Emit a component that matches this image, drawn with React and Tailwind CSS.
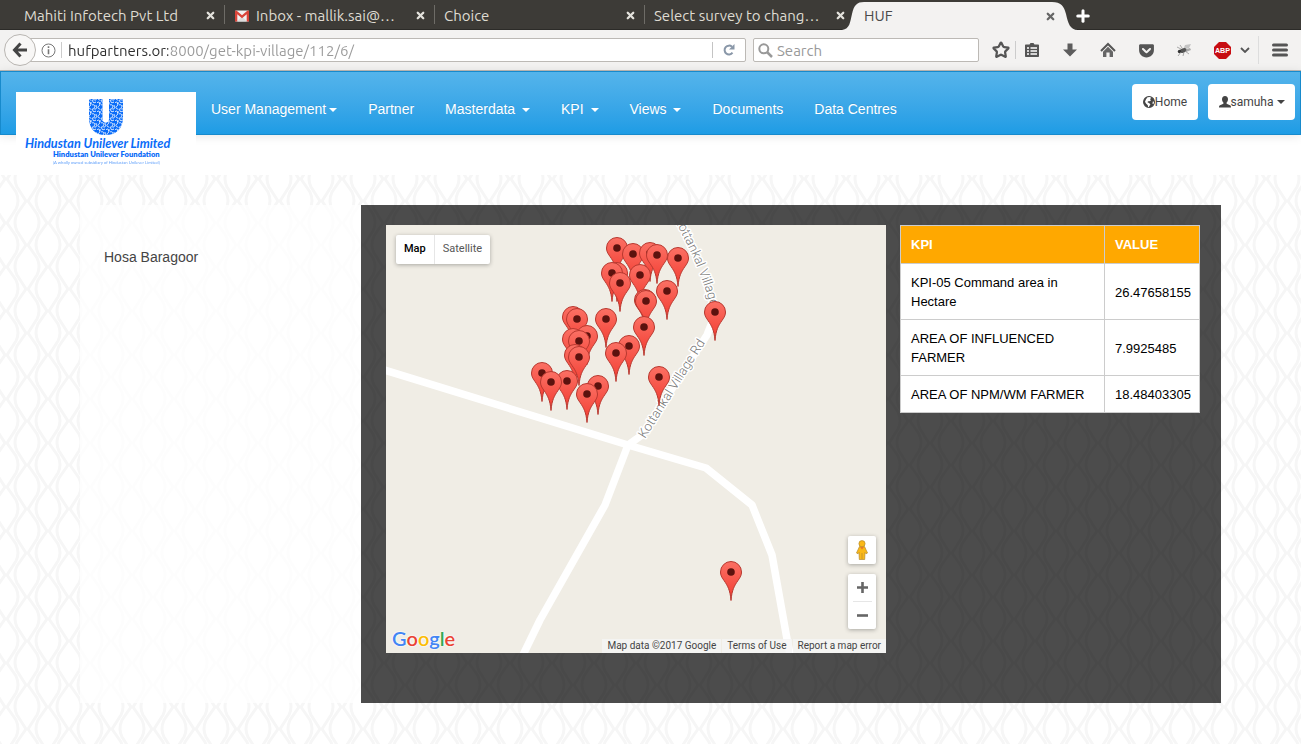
import React from "react";
import { FaGetPocket } from "react-icons/fa";
import { Star, X, Plus } from "lucide-react";

const TABS = [
  { title: "Mahiti Infotech Pvt Ltd" },
  { title: "Inbox - mallik.sai@…", mail: true },
  { title: "Choice" },
  { title: "Select survey to chang…" },
];

const NAV = [
  { label: "User Management", menu: true, tight: true },
  { label: "Partner" },
  { label: "Masterdata", menu: true },
  { label: "KPI", menu: true },
  { label: "Views", menu: true },
  { label: "Documents" },
  { label: "Data Centres" },
];

const ROWS = [
  ["KPI-05 Command area in Hectare", "26.47658155"],
  ["AREA OF INFLUENCED FARMER", "7.9925485"],
  ["AREA OF NPM/WM FARMER", "18.48403305"],
];

const PINS = [
  [231, 23], [247, 29], [264, 28], [271, 30], [292, 33], [231, 48], [226, 48],
  [254, 50], [234, 58], [281, 66], [259, 75], [260, 76], [329, 87], [187, 92],
  [191, 94], [220, 94], [258, 102], [201, 111], [187, 114], [193, 116],
  [243, 121], [230, 128], [189, 130], [193, 132], [156, 148], [273, 152],
  [181, 156], [165, 157], [212, 161], [201, 169], [345, 347],
];

function GmailIcon() {
  return (
    <svg className="size-4 shrink-0" viewBox="0 0 16 16" aria-hidden="true">
      <rect x="1" y="2.5" width="14" height="11" rx="1" fill="#f2f2f2" />
      <path d="M3 13.5 8 8.6l5 4.9z" fill="#dcdcdc" />
      <path d="M1 3.5v10h2.3V6.2L8 10.3l4.7-4.1v7.3H15v-10c0-.8-1-1.3-1.7-.8L8 7.2 2.7 2.7C2 2.200 1 2.700 1 3.500z" fill="#d9453a" />
    </svg>
  );
}

function Tab({ title, mail }) {
  return (
    <div className="flex w-[210px] shrink-0 items-center pr-[6px] pt-[2px]">
      {mail && <span className="-mr-1 pl-[10px]"><GmailIcon /></span>}
      <button className="min-w-0 flex-1 whitespace-nowrap pl-[10px] text-left">{title}</button>
      <button aria-label={"Close " + title} className="flex size-4 shrink-0 items-center justify-center">
        <X className="size-[11px] text-[#e4e2dc]" strokeWidth={5} />
      </button>
    </div>
  );
}

function TabStrip() {
  return (
    <div className="flex h-[30px] items-stretch border-b border-[#2c2b28] bg-[#3d3b37] pl-[14px] text-[#dfdbd2]">
      {TABS.map((t, i) => (
        <React.Fragment key={t.title}>
          {i > 0 && <span className="-mr-px my-[5px] w-px shrink-0 bg-[#6e6c67]" />}
          <Tab {...t} />
        </React.Fragment>
      ))}
      <div className="relative -mb-px flex w-[212px] shrink-0 items-center pl-[10px] pr-[8px] pt-[2px] text-[#4a4a4a]">
        <svg className="absolute -left-3 top-0 h-[30px] w-[236px]" viewBox="0 0 236 30" aria-hidden="true">
          <path d="M0 30C8 29 8 22 10 14 12 5 15 2 22 2H210C219 2 222 6 224 14 226 23 228 30 236 30z" fill="#f3f2f1" />
        </svg>
        <button className="relative min-w-0 flex-1 text-left">HUF</button>
        <button aria-label="Close HUF" className="relative flex size-4 items-center justify-center">
          <X className="size-[11px] text-[#666]" strokeWidth={5} />
        </button>
      </div>
      <button aria-label="Open a new tab" className="pl-[8px] pt-[2px]">
        <Plus className="size-[18px] text-white" strokeWidth={4} />
      </button>
    </div>
  );
}

function ToolButton({ label, children }) {
  return (
    <button aria-label={label} className="flex w-[38px] shrink-0 items-center justify-center text-[#555]">
      {children}
    </button>
  );
}

function Toolbar() {
  return (
    <div className="flex h-[41px] items-center border-b border-[#bdbab6] bg-[#f3f2f1] pl-1">
      <button aria-label="Back" className="z-10 flex size-8 shrink-0 items-center justify-center rounded-full border border-[#b9b6b2] bg-[#f8f7f6]">
        <svg className="size-4" viewBox="0 0 16 16" fill="none" stroke="#444" strokeWidth="3" aria-hidden="true">
          <path d="M8.500 1.500 2.500 8l6 6.500M3 8h12" />
        </svg>
      </button>
      <div className="-ml-4 flex h-6 min-w-0 flex-1 items-center rounded-[2px] border border-[#bcb9b5] bg-white pl-5">
        <svg className="size-[15px] shrink-0" viewBox="0 0 15 15" fill="none" stroke="#777" aria-hidden="true">
          <circle cx="7.5" cy="7.5" r="6.500" />
          <path d="M7.500 3.300v1.600M7.500 6.300v5" strokeWidth="1.600" />
        </svg>
        <span className="ml-[5px] mr-[6px] h-4 w-px bg-[#ccc]" />
        <input
          aria-label="Address"
          defaultValue="hufpartners.or:8000/get-kpi-village/112/6/"
          className="h-full min-w-0 flex-1 bg-[linear-gradient(90deg,#2d2d2d_100px,#999_100px)] bg-clip-text text-transparent outline-none"
        />
        <span className="h-4 w-px bg-[#c4c4c4]" />
        <button aria-label="Reload" className="px-[10px]">
          <svg className="size-3" viewBox="0 0 12 12" aria-hidden="true">
            <path d="M9.500 8.700A4.400 4.400 0 1 1 9 2.800" fill="none" stroke="#8997a8" strokeWidth="2" />
            <path d="M11.500 0v5.500H6z" fill="#8997a8" />
          </svg>
        </button>
      </div>
      <div className="ml-[7px] flex h-6 w-[226px] shrink-0 items-center gap-1 rounded-[2px] border border-[#bcb9b5] bg-white pl-1">
        <svg className="size-[15px] shrink-0" viewBox="0 0 15 15" fill="none" stroke="#999" strokeWidth="2" aria-hidden="true">
          <circle cx="5.800" cy="5.800" r="4.500" />
          <path d="m9 9 5 5" strokeWidth="2.500" />
        </svg>
        <input aria-label="Search" placeholder="Search" className="h-full min-w-0 flex-1 outline-none placeholder:text-[#999]" />
      </div>
      <button aria-label="Bookmark this page" className="ml-[13px] flex shrink-0 items-center">
        <Star className="size-[18px] text-[#555]" strokeWidth={3} strokeLinejoin="miter" />
      </button>
      <span className="ml-[5px] -mr-[3px] h-[18px] w-px bg-[#ccc]" />
      <ToolButton label="Bookmarks">
        <svg className="size-4" viewBox="0 0 16 16" fill="none" aria-hidden="true">
          <path d="M2 2.500h3.500L6.500 1h3l1 1.500H14c.6 0 1 .4 1 1V14c0 .6-.4 1-1 1H2c-.6 0-1-.4-1-1V3.500c0-.6.4-1 1-1z" fill="#555" />
          <path d="M3 6h2M3 9h2M3 12h2M6.500 6H13M6.500 9H13M6.500 12H13" stroke="#fff" strokeWidth="1.700" />
        </svg>
      </ToolButton>
      <ToolButton label="Downloads">
        <svg className="size-4" viewBox="0 0 16 16" aria-hidden="true">
          <path d="M5.500 1.500h5v6H15l-7 7-7-7h4.500z" fill="#5d5d5d" />
        </svg>
      </ToolButton>
      <ToolButton label="Home page">
        <svg className="size-4" viewBox="0 0 16 16" aria-hidden="true">
          <path d="M1 9 8 2l7 7" fill="none" stroke="#555" strokeWidth="2" />
          <path d="M3 9.800 8 4.800l5 5V15H9.600v-4.500H6.400V15H3z" fill="#666" />
        </svg>
      </ToolButton>
      <ToolButton label="Pocket"><FaGetPocket className="size-[17px]" /></ToolButton>
      <ToolButton label="Fly add-on">
        <svg className="size-4" viewBox="0 0 16 16" aria-hidden="true">
          <path d="M7 8 9 3l6-1-2 4z" fill="#c4c4c4" />
          <path d="m8 8 6-2 1 2-5 2z" fill="#aaa" />
          <ellipse cx="7" cy="8.500" rx="3.500" ry="2.200" transform="rotate(-25 7 8.500)" fill="#555" />
          <circle cx="3.500" cy="9.500" r="1.700" fill="#333" />
          <path d="M5 7 1 5M6 6 4 3M5 10l-3 4M8 10l-1 4M9 9l4 3" stroke="#888" strokeWidth=".7" />
        </svg>
      </ToolButton>
      <ToolButton label="Adblock Plus">
        <svg className="size-[17px]" viewBox="0 0 17 17" aria-hidden="true">
          <path d="M5 0h7l5 5v7l-5 5H5l-5-5V5z" fill="#c70d12" />
          <text x="8.500" y="11.200" textAnchor="middle" fill="#fff" fontFamily="Liberation Sans, sans-serif" fontWeight="700" fontSize="7.200">ABP</text>
        </svg>
      </ToolButton>
      <button aria-label="Adblock options" className="flex w-2 shrink-0 items-center justify-center">
        <svg className="h-[6px] w-[10px] shrink-0" viewBox="0 0 10 6" fill="none" stroke="#555" strokeWidth="1.800" aria-hidden="true"><path d="m1 1 4 4 4-4" /></svg>
      </button>
      <span className="ml-[9px] h-7 w-px bg-[#ddd]" />
      <button aria-label="Open menu" className="flex w-[42px] shrink-0 items-center justify-center">
        <svg className="size-4" viewBox="0 0 16 16" stroke="#555" strokeWidth="3" strokeLinecap="round" aria-hidden="true"><path d="M1.500 3h13M1.500 8h13M1.500 13h13" /></svg>
      </button>
    </div>
  );
}

function Caret() {
  return <span className="ml-[3px] inline-block border-x-4 border-t-4 border-x-transparent border-t-current align-middle" />;
}

function BrandLogo() {
  return (
    <svg className="h-[83px] w-[180px]" viewBox="0 0 180 83" role="img" aria-label="Hindustan Unilever Limited">
      <defs>
        <pattern id="swirls" width="9" height="9" patternUnits="userSpaceOnUse">
          <path d="M0 2c2-3 4 2 2 3s-1 3 1 3M5 0c-1 2 2 2 3 1M4 4c2-1 4 1 2 3M8 4c0 2 1 2 1 4M4 9c0-2 2-1 4-1M3 1v2" fill="none" stroke="#fff" strokeWidth=".9" />
        </pattern>
      </defs>
      <path d="M73 7h13.500v20c0 5 6.500 5 6.500 0V7h14v18c0 12-7 18-17.500 18S73 37 73 25z" fill="#0a6cf8" />
      <path d="M73 7h13.500v20c0 5 6.500 5 6.500 0V7h14v18c0 12-7 18-17.500 18S73 37 73 25z" fill="url(#swirls)" />
      <g fill="#0a6cf8">
        <text x="9" y="55.500" fontFamily="Lato, sans-serif" fontStyle="italic" fontWeight="700" fontSize="12.700">Hindustan Unilever Limited</text>
        <text x="37" y="65" fontFamily="Lato, sans-serif" fontWeight="800" fontSize="7.600">Hindustan Unilever Foundation</text>
        <text x="37" y="71.500" fontFamily="Lato, sans-serif" fontSize="4.200" opacity=".65">(A wholly owned subsidiary of Hindustan Unilever Limited)</text>
      </g>
    </svg>
  );
}

function SiteHeader() {
  return (
    <header className="relative z-10 bg-white pb-10">
      <nav className="flex h-16 border border-[#178acc] bg-linear-to-b from-[#54b4eb] to-[#1d9ce5] shadow-[0_1px_10px_rgba(0,0,0,0.1)]">
        <a href="#home" className="ml-[15px] mt-5 h-[83px] w-[180px] shrink-0 bg-white"><BrandLogo /></a>
        <ul className="flex flex-1 gap-px text-[14px] leading-5 text-white">
          {NAV.map((n) => (
            <li key={n.label}>
              <a href="#nav" className="block whitespace-nowrap px-[15px] pt-[27px] [text-shadow:0_-1px_0_rgba(0,0,0,0.1)]">
                {n.label}
                {n.menu && <>{n.tight ? "" : " "}<Caret /></>}
              </a>
            </li>
          ))}
        </ul>
        <div className="flex gap-[10px] pr-[5px] pt-3 font-['Roboto',sans-serif] text-[12px] text-[#444]">
          <button className="flex h-9 w-[66px] items-center justify-center rounded-[4px] bg-white">
            <svg className="size-3 shrink-0" viewBox="0 0 12 12" aria-hidden="true">
              <circle cx="6" cy="6" r="5.400" fill="#444" stroke="#444" strokeWidth="1.100" />
              <path d="M4.500 1.200 7 .9l1.300 1L7 3l1 1.500-1.600.8L5 5.200l-.5 1L6 7l1.400 1.200L6 10.700l-.8.500-.4-2L3 7.500 2 5.800l1-2.600zM10 5l1 1.200-.6 2-1-.7z" fill="#fff" />
            </svg>
            Home
          </button>
          <button className="flex h-9 w-[87px] items-center justify-center rounded-[4px] bg-white">
            <svg className="size-3 shrink-0" viewBox="0 0 12 12" aria-hidden="true">
              <path d="M6 0c2 0 3 1.400 3 3.200 0 1.600-.7 2.700-1.400 3.400v1.200L11 9.300c.7.300 1 .7 1 2.200H0c0-1.500.3-1.900 1-2.200l3.400-1.500V6.600C3.700 5.900 3 4.800 3 3.200 3 1.400 4 0 6 0z" fill="#444" />
            </svg>
            samuha
            <Caret />
          </button>
        </div>
      </nav>
    </header>
  );
}

function Backdrop() {
  return (
    <svg className="absolute inset-0 size-full" aria-hidden="true">
      <defs>
        <pattern id="lattice" width="42" height="44" patternUnits="userSpaceOnUse">
          <g fill="none" stroke="#f6f6f6" strokeWidth="3" strokeLinejoin="round">
            <path d="M26-18 17-5Q13 4 17 12L26 26 17 39Q13 48 17 56" />
            <path d="M28-18 37-5Q41 4 37 12L28 26 37 39Q41 48 37 56" />
            <path d="M5-40-4-27Q-8-18-4-10L5 4-4 17Q-8 26-4 34L5 48" />
            <path d="M7-40 16-27Q20-18 16-10L7 4 16 17Q20 26 16 34L7 48" />
            <path d="M47-40 38-27Q34-18 38-10L47 4 38 17Q34 26 38 34L47 48" />
          </g>
        </pattern>
      </defs>
      <rect width="100%" height="100%" fill="url(#lattice)" />
    </svg>
  );
}

function Map() {
  return (
    <section aria-label="Map" className="relative h-[428px] w-[500px] shrink-0 overflow-hidden bg-[#f0ede5] font-['Roboto',sans-serif]">
      <svg className="absolute inset-0 size-full" viewBox="0 0 500 428" aria-hidden="true">
        <defs>
          <linearGradient id="pinFill" x1="0" y1="0" x2="0" y2="1">
            <stop offset="0" stopColor="#fb7064" />
            <stop offset="1" stopColor="#f23b30" />
          </linearGradient>
          <g id="pin">
            <path d="M0 28.500C-.8 18-3.500 13.500-7 8.500-9.500 5-10.500 3-10.500 0a10.500 10.500 0 0 1 21 0C10.500 3 9.500 5 7 8.500 3.500 13.500.8 18 0 28.500z" fill="url(#pinFill)" stroke="#b8382f" />
            <circle r="3.800" fill="#5c120e" />
          </g>
          <path id="roadSouth" d="M259 214 321 115 335 92" />
          <path id="roadNorth" d="M288-6Q315 43 325 84L329 120" />
        </defs>
        <g fill="none" stroke="#fff" strokeWidth="7.500" strokeLinejoin="round">
          <path d="M-5 144 242 220l78 23 46 37 20 50 15 84 4 20" />
          <path d="M136 432l18-37 65-115 23-60 14-10 65-100 8-20" />
        </g>
        <g fontFamily="Roboto, sans-serif" fontSize="13" fontWeight="300" fill="#777" stroke="#fff" strokeWidth="3" paintOrder="stroke" strokeLinejoin="round">
          <text><textPath href="#roadSouth">Kottankal Village Rd</textPath></text>
          <text><textPath href="#roadNorth">Kottankal Village</textPath></text>
        </g>
        {PINS.map(([x, y], i) => <use key={i} href="#pin" x={x} y={y} />)}
      </svg>

      <div className="absolute left-[10px] top-[10px] flex h-[29px] rounded-[2px] bg-white text-[11px] shadow-[0_1px_4px_rgba(0,0,0,0.3)]">
        <button className="border-r border-[#e6e6e6] px-2 font-medium text-black">Map</button>
        <button className="px-2 text-[#565656]">Satellite</button>
      </div>

      <button aria-label="Street View" className="absolute right-[10px] top-[311px] flex size-7 items-center justify-center rounded-[2px] bg-white shadow-[0_1px_4px_rgba(0,0,0,0.3)]">
        <svg className="h-5 w-3" viewBox="0 0 12 20" aria-hidden="true">
          <path d="M3.500 6.500h5L11.500 13l-1.500.8-1-1.300-.3 7H3.300l-.3-7-1 1.300L.5 13z" fill="#fbb917" stroke="#b58a2e" strokeWidth=".7" />
          <circle cx="6" cy="3.700" r="3.100" fill="#fbb917" stroke="#b58a2e" strokeWidth=".7" />
          <path d="m4 7 2 2.500L8 7z" fill="#e8782a" />
          <path d="M6 13v6" stroke="#b58a2e" strokeWidth=".7" />
        </svg>
      </button>
      <div className="absolute right-[10px] top-[349px] flex w-7 flex-col items-center rounded-[2px] bg-white shadow-[0_1px_4px_rgba(0,0,0,0.3)]">
        <button aria-label="Zoom in" className="flex h-[27px] w-full items-center justify-center">
          <svg className="size-[11px]" viewBox="0 0 11 11" stroke="#666" strokeWidth="2.600" aria-hidden="true"><path d="M0 5.500h11M5.500 0v11" /></svg>
        </button>
        <span className="h-px w-[19px] bg-[#e6e6e6]" />
        <button aria-label="Zoom out" className="flex h-[27px] w-full items-center justify-center">
          <svg className="size-[11px]" viewBox="0 0 11 11" stroke="#666" strokeWidth="2.600" aria-hidden="true"><path d="M0 5.500h11" /></svg>
        </button>
      </div>

      <a href="#google" aria-label="Google" className="absolute bottom-[3px] left-[6px] font-['Lato',sans-serif] text-[20px] font-semibold leading-6 [text-shadow:0_0_2px_#fff,0_0_2px_#fff]">
        <span className="text-[#4285f4]">G</span><span className="text-[#ea4335]">o</span><span className="text-[#fbbc05]">o</span><span className="text-[#4285f4]">g</span><span className="text-[#34a853]">l</span><span className="text-[#ea4335]">e</span>
      </a>
      <div className="absolute bottom-0 right-0 flex gap-px text-[10px] leading-[14px] text-[#444]">
        <span className="bg-[#f5f5f5]/80 px-[5px]">Map data ©2017 Google</span>
        <a href="#terms" className="bg-[#f5f5f5]/80 px-[5px]">Terms of Use</a>
        <a href="#report" className="bg-[#f5f5f5]/80 px-[5px]">Report a map error</a>
      </div>
    </section>
  );
}

function KpiTable() {
  return (
    <table className="w-[300px] table-fixed border-collapse bg-white text-left text-[13px] leading-[19px] text-black">
      <thead>
        <tr className="bg-[#ffa800] text-white">
          <th className="w-[204px] border border-[#ccc] px-[10px] pb-[9px] pt-[9px]">KPI</th>
          <th className="border border-[#ccc] px-[10px] pb-[9px] pt-[9px]">VALUE</th>
        </tr>
      </thead>
      <tbody>
        {ROWS.map(([k, v]) => (
          <tr key={k}>
            <td className="border border-[#ccc] px-[10px] pb-2 pt-[9px]">{k}</td>
            <td className="border border-[#ccc] px-[10px] pb-2 pt-[9px]">{v}</td>
          </tr>
        ))}
      </tbody>
    </table>
  );
}

export default function App() {
  return (
    <div className="flex min-h-screen flex-col bg-white font-['Liberation_Sans',Arial,sans-serif]">
      <div className="font-['Ubuntu','Noto_Sans',sans-serif] text-[15px] leading-5">
        <TabStrip />
        <Toolbar />
      </div>
      <SiteHeader />
      <main className="relative flex-1 px-20 pb-[41px] pt-[30px]">
        <Backdrop />
        <div className="relative flex">
          <aside className="w-[281px] shrink-0 bg-white/80 pl-6 pt-[42px] text-[14px] leading-5 text-[#444]">Hosa Baragoor</aside>
          <div className="flex flex-1 items-start gap-[14px] bg-black/70 pb-[50px] pl-[25px] pr-[21px] pt-5">
            <Map />
            <KpiTable />
          </div>
        </div>
      </main>
    </div>
  );
}
